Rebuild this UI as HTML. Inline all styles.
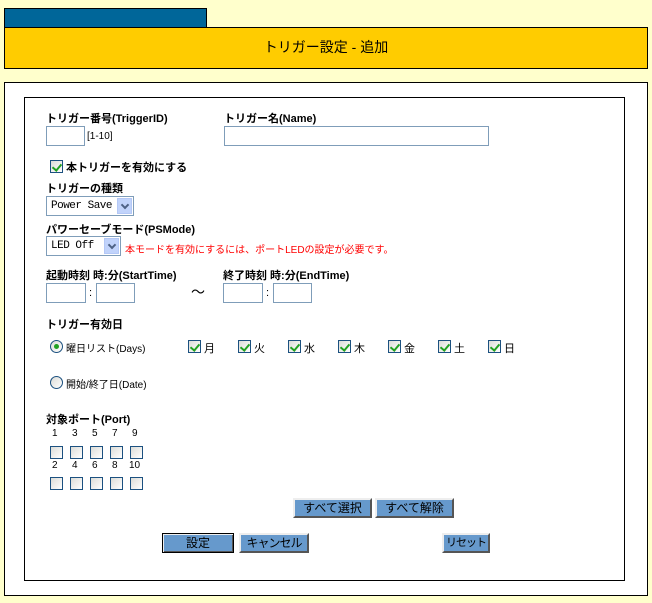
<!DOCTYPE html>
<html><head><meta charset="utf-8"><style>
*{box-sizing:border-box;margin:0;padding:0}
body{width:652px;height:603px;background:#ffffcc;position:relative;overflow:hidden;font-family:"Liberation Sans","Noto Sans CJK JP",sans-serif;font-size:11px;color:#000}
.a{position:absolute;white-space:nowrap}
.b{font-weight:bold}
.in{position:absolute;height:20px;border:1px solid #7f9db9;background:#fff}
.cb{position:absolute;width:13px;height:13px;border:1px solid #1c5180;background:linear-gradient(135deg,#dcdcd7,#fff)}
.cb.c::after{content:"";position:absolute;left:3px;top:1px;width:4px;height:7px;border:solid #21a121;border-width:0 2px 2px 0;transform:rotate(40deg)}
.rd{position:absolute;width:13px;height:13px;border:1px solid #1c5180;border-radius:50%;background:linear-gradient(135deg,#dcdcd7,#fff)}
.btn{position:absolute;height:20px;background:#6699cc;border:2px solid;border-color:#eee #555 #555 #eee;font-size:12px;text-align:center;line-height:16px;white-space:nowrap;overflow:hidden}
.sel{position:absolute;height:20px;border:1px solid #7f9db9;background:#fff;font-size:11px;padding-left:4px;line-height:18px;white-space:nowrap;overflow:hidden;font-family:"Liberation Mono","Noto Sans CJK JP",monospace;letter-spacing:-0.5px}
.sel i{position:absolute;right:1px;top:1px;width:15px;height:16px;background:#c1d3fb;border:1px solid #b4c8f6}
.sel i::after{content:"";position:absolute;left:4px;top:3px;width:4px;height:4px;border:solid #4d6185;border-width:0 2px 2px 0;transform:rotate(45deg)}
</style></head><body>
<div class="a" style="left:4px;top:8px;width:203px;height:20px;background:#006699;border:1px solid #000"></div>
<div class="a" style="left:4px;top:27px;width:644px;height:42px;background:#ffcc00;border:1px solid #000;text-align:center;line-height:38px;font-size:14px">トリガー設定 - 追加</div>
<div class="a" style="left:4px;top:82px;width:644px;height:514px;background:#fff;border:1px solid #000"></div>
<div class="a" style="left:24px;top:97px;width:601px;height:484px;border:1px solid #000"></div>

<div class="a b" style="left:46px;top:110px">トリガー番号(TriggerID)</div>
<div class="a b" style="left:224px;top:110px">トリガー名(Name)</div>
<div class="in" style="left:46px;top:126px;width:39px"></div>
<div class="a" style="left:87px;top:131px;font-size:10px">[1-10]</div>
<div class="in" style="left:224px;top:126px;width:265px"></div>

<div class="cb c" style="left:50px;top:160px"></div>
<div class="a b" style="left:66px;top:159px">本トリガーを有効にする</div>

<div class="a b" style="left:46px;top:180px">トリガーの種類</div>
<div class="sel" style="left:46px;top:196px;width:88px">Power Save<i></i></div>

<div class="a b" style="left:46px;top:221px">パワーセーブモード(PSMode)</div>
<div class="sel" style="left:46px;top:236px;width:75px">LED Off<i></i></div>
<div class="a" style="left:125px;top:241px;color:#f00;font-size:10px">本モードを有効にするには、ポートLEDの設定が必要です。</div>

<div class="a b" style="left:46px;top:267px">起動時刻 時:分(StartTime)</div>
<div class="a b" style="left:223px;top:267px">終了時刻 時:分(EndTime)</div>
<div class="in" style="left:46px;top:283px;width:40px"></div>
<div class="a" style="left:89px;top:287px">:</div>
<div class="in" style="left:96px;top:283px;width:39px"></div>
<div class="a" style="left:191px;top:282px;font-size:14px">～</div>
<div class="in" style="left:223px;top:283px;width:40px"></div>
<div class="a" style="left:266px;top:287px">:</div>
<div class="in" style="left:273px;top:283px;width:39px"></div>

<div class="a b" style="left:46px;top:316px">トリガー有効日</div>
<div class="rd" style="left:50px;top:340px"><div style="position:absolute;left:3px;top:3px;width:5px;height:5px;border-radius:50%;background:#21a121"></div></div>
<div class="a" style="left:66px;top:340px;font-size:10px">曜日リスト(Days)</div>
<div class="cb c" style="left:188px;top:340px"></div><div class="a" style="left:204px;top:340px">月</div>
<div class="cb c" style="left:238px;top:340px"></div><div class="a" style="left:254px;top:340px">火</div>
<div class="cb c" style="left:288px;top:340px"></div><div class="a" style="left:304px;top:340px">水</div>
<div class="cb c" style="left:338px;top:340px"></div><div class="a" style="left:354px;top:340px">木</div>
<div class="cb c" style="left:388px;top:340px"></div><div class="a" style="left:404px;top:340px">金</div>
<div class="cb c" style="left:438px;top:340px"></div><div class="a" style="left:454px;top:340px">土</div>
<div class="cb c" style="left:488px;top:340px"></div><div class="a" style="left:504px;top:340px">日</div>
<div class="rd" style="left:50px;top:376px"></div>
<div class="a" style="left:66px;top:376px;font-size:10px">開始/終了日(Date)</div>

<div class="a b" style="left:46px;top:411px">対象ポート(Port)</div>
<div class="a" style="left:52px;top:428px;font-size:10px">1</div>
<div class="a" style="left:72px;top:428px;font-size:10px">3</div>
<div class="a" style="left:92px;top:428px;font-size:10px">5</div>
<div class="a" style="left:112px;top:428px;font-size:10px">7</div>
<div class="a" style="left:132px;top:428px;font-size:10px">9</div>
<div class="cb" style="left:50px;top:446px"></div><div class="cb" style="left:70px;top:446px"></div><div class="cb" style="left:90px;top:446px"></div><div class="cb" style="left:110px;top:446px"></div><div class="cb" style="left:130px;top:446px"></div>
<div class="a" style="left:52px;top:460px;font-size:10px">2</div>
<div class="a" style="left:72px;top:460px;font-size:10px">4</div>
<div class="a" style="left:92px;top:460px;font-size:10px">6</div>
<div class="a" style="left:112px;top:460px;font-size:10px">8</div>
<div class="a" style="left:129px;top:460px;font-size:10px">10</div>
<div class="cb" style="left:50px;top:477px"></div><div class="cb" style="left:70px;top:477px"></div><div class="cb" style="left:90px;top:477px"></div><div class="cb" style="left:110px;top:477px"></div><div class="cb" style="left:130px;top:477px"></div>

<div class="btn" style="left:293px;top:498px;width:79px">すべて選択</div>
<div class="btn" style="left:375px;top:498px;width:79px">すべて解除</div>
<div class="btn" style="left:162px;top:533px;width:72px;border:1px solid #000;box-shadow:inset 1px 1px #eee,inset -1px -1px #555;line-height:18px">設定</div>
<div class="btn" style="left:239px;top:533px;width:70px;letter-spacing:-1px">キャンセル</div>
<div class="btn" style="left:442px;top:533px;width:48px;font-size:11px;letter-spacing:-1px">リセット</div>
</body></html>
